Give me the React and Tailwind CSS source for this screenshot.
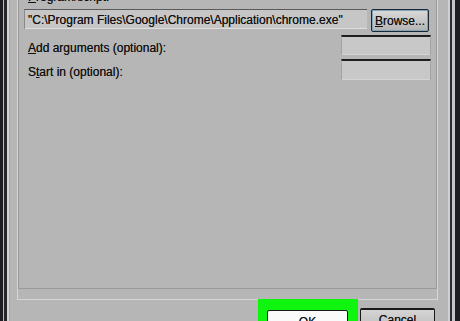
export default function App() {
  const font = { fontFamily: '"Liberation Sans", Arial, sans-serif' };
  return (
    <div
      className="flex h-[321px] w-[460px] overflow-hidden bg-[#b6b6b6] text-[12px] leading-[14px] text-[#111] [text-shadow:0_0_0.6px_rgba(0,0,0,0.7)]"
      style={font}
    >
      {/* left window frame */}
      <div className="w-[3px] shrink-0 bg-[#1c1c22]" />
      <div className="w-[1px] shrink-0 bg-[#b9bcc8]" />
      <div className="w-[3px] shrink-0 bg-[#26262a]" />
      <div className="w-[2px] shrink-0 bg-[#d2d2d2]" />
      <div className="w-[1px] shrink-0 bg-[#a8a8a8]" />

      {/* content */}
      <div className="flex min-w-0 flex-1 flex-col">
        {/* group box */}
        <div className="ml-[7px] mr-[10px] h-[300px] shrink-0 border-b border-l border-r border-[#d6d6d6]">
          <div className="h-full border-b border-l border-r border-[#999]">
            <div className="-mt-[10px] pl-[9px]">
              <span>
                <span className="underline">P</span>rogram/script:
              </span>
            </div>
            {/* row 1 */}
            <div className="mt-[5px] flex items-start gap-[4px] pl-[5px] pr-[7px]">
              <div className="flex h-[20px] flex-1 items-center border-t border-l border-t-[#5a5a5a] border-l-[#8a8a8a] bg-[#c6c6c6] pl-[3px] shadow-[inset_0_-1px_0_#dedede]">
                <span className="whitespace-nowrap">
                  "C:\Program Files\Google\Chrome\Application\chrome.exe"
                </span>
              </div>
              <div className="flex h-[23px] w-[58px] items-center justify-center rounded-[2px] border border-[#1b2733] bg-gradient-to-b from-[#dadada] to-[#b4b4b4] shadow-[inset_0_0_0_1px_#7fa3b8]">
                <span>
                  <span className="underline">B</span>rowse...
                </span>
              </div>
            </div>
            {/* row 2 */}
            <div className="mt-[3px] flex items-start justify-between pl-[9px] pr-[5px]">
              <span className="pt-[6px]">
                <span className="underline">A</span>dd arguments (optional):
              </span>
              <div className="h-[20px] w-[90px] border-t-2 border-l border-r border-t-[#1e1e1e] border-l-[#a4a4a4] border-r-[#a4a4a4] bg-[#c8c8c8] shadow-[inset_0_-1px_0_#d4d4d4]" />
            </div>
            {/* row 3 */}
            <div className="mt-[4px] flex items-start justify-between pl-[9px] pr-[5px]">
              <span className="pt-[6px]">
                S<span className="underline">t</span>art in (optional):
              </span>
              <div className="h-[21px] w-[90px] border-t-2 border-l border-r border-t-[#1e1e1e] border-l-[#a4a4a4] border-r-[#a4a4a4] bg-[#c8c8c8] shadow-[inset_0_-1px_0_#d4d4d4]" />
            </div>
          </div>
        </div>

        {/* buttons */}
        <div className="-mt-[1px] flex items-start justify-end gap-[2px] pr-[13px]">
          <div className="h-[30px] w-[100px] shrink-0 bg-[#10f510] pl-[9px] pr-[10px] pt-[11px]">
            <div className="flex h-[23px] items-center justify-center rounded-[2px] border border-[#1a1a1a] bg-[#fafafa]">
              OK
            </div>
          </div>
          <div className="mt-[9px] flex h-[23px] w-[75px] shrink-0 items-center justify-center rounded-[2px] border border-t-2 border-[#1a1a1a] bg-gradient-to-b from-[#d4d4d4] to-[#bcbcbc]">
            Cancel
          </div>
        </div>
      </div>

      {/* right window frame */}
      <div className="w-[2px] shrink-0 bg-[#d0d0d0]" />
      <div className="w-[2px] shrink-0 bg-[#2a2a30]" />
      <div className="w-[3px] shrink-0 bg-[#c4c6ce]" />
      <div className="w-[5px] shrink-0 bg-[#1e1e22]" />
    </div>
  );
}
